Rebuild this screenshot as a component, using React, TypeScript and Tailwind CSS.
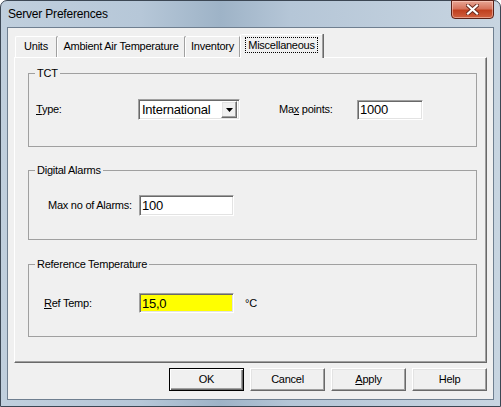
import type { ReactNode } from "react";

const sunken =
  "border border-t-[#a0a0a0] border-l-[#a0a0a0] border-b-white border-r-white shadow-[inset_1px_1px_0_#696969,inset_-1px_-1px_0_#e3e3e3]";

const raised =
  "border border-t-white border-l-white border-r-[#696969] border-b-[#696969] shadow-[inset_-1px_-1px_0_#a0a0a0,inset_1px_1px_0_#e3e3e3]";

function GroupBox({
  title,
  className,
  children,
}: {
  title: string;
  className: string;
  children: ReactNode;
}) {
  return (
    <fieldset className={`border border-[#a0a0a0] ${className}`}>
      <legend className="ml-[6px] px-[2px] leading-[13px]">{title}</legend>
      {children}
    </fieldset>
  );
}

function TextBox({
  value,
  width,
  height = "h-[21px]",
  bg = "bg-white",
}: {
  value: string;
  width: string;
  height?: string;
  bg?: string;
}) {
  return (
    <div
      className={`flex items-center pl-[2px] text-[13px] leading-none ${width} ${height} ${bg} ${sunken}`}
    >
      {value}
    </div>
  );
}

function Button({
  label,
  isDefault,
}: {
  label: ReactNode;
  isDefault?: boolean;
}) {
  return (
    <button
      className={`flex h-[23px] w-[75px] items-center justify-center bg-[#f0f0f0] ${
        isDefault
          ? "border border-black shadow-[inset_1px_1px_0_#fff,inset_-1px_-1px_0_#696969,inset_-2px_-2px_0_#a0a0a0]"
          : raised
      }`}
    >
      {label}
    </button>
  );
}

const tabs = [
  { name: "Units", width: "w-[42px]" },
  { name: "Ambient Air Temperature", width: "w-[128px]" },
  { name: "Inventory", width: "w-[55px]" },
];

export default function App() {
  return (
    <div className="h-[407px] w-[501px] bg-white font-['Liberation_Sans',Arial,sans-serif] text-[11px] tracking-[-0.25px] text-black">
      <div className="flex h-full flex-col rounded-t-[7px] border border-[#3c4754] bg-[linear-gradient(90deg,#c0cfdd_0%,#b6c7d8_28%,#9eb3c7_44%,#b5c6d7_58%,#c8d5e1_100%)]">
        {/* title bar */}
        <div className="flex h-[26px] items-start justify-between pl-[7px] pr-[6px]">
          <span className="mt-[6px] text-[12px] leading-[14px] tracking-[-0.2px]">
            Server Preferences
          </span>
          <div className="-mt-px flex h-[19px] w-[43px] items-center justify-center rounded-b-[4px] border border-[#5b2117] bg-[linear-gradient(180deg,#e8a594_0%,#d6735c_45%,#c0401f_55%,#d0603f_100%)] shadow-[inset_0_0_0_1px_rgba(255,220,210,0.5)]">
            <svg width="13" height="11" viewBox="0 0 13 11">
              <path
                d="M2 1.5 L11 9.5 M11 1.5 L2 9.5"
                stroke="#6a2a1e"
                strokeWidth="4"
                strokeLinecap="square"
              />
              <path
                d="M2 1.5 L11 9.5 M11 1.5 L2 9.5"
                stroke="#ffffff"
                strokeWidth="2.2"
                strokeLinecap="square"
              />
            </svg>
          </div>
        </div>

        {/* client area */}
        <div className="mx-[6px] mb-[6px] flex flex-1 flex-col border border-[#6f7f90] bg-[#f0f0f0] px-[6px]">
          {/* tab strip */}
          <div className="mt-[6px] flex h-[23px] items-end pl-[1px]">
            {tabs.map((t) => (
              <div
                key={t.name}
                className={`flex h-[21px] items-center justify-center rounded-tl-[2px] border-l border-t border-r border-white border-r-[#a0a0a0] pb-[1px] shadow-[1px_0_0_#696969] ${t.width}`}
              >
                {t.name}
              </div>
            ))}
            <div className="relative z-10 -mb-px flex h-[24px] w-[83px] items-start justify-center rounded-tl-[2px] border-l border-t border-r border-white border-r-[#a0a0a0] bg-[#f0f0f0] pt-[2px] shadow-[1px_0_0_#696969]">
              <span className="border border-dotted border-black px-[2px] leading-[14px]">
                Miscellaneous
              </span>
            </div>
          </div>

          {/* tab panel */}
          <div className="flex flex-1 flex-col border border-white border-b-[#696969] border-r-[#696969] pl-[13px] pr-[9px] shadow-[inset_-1px_-1px_0_#a0a0a0]">
            <GroupBox title="TCT" className="mt-[9px] pb-[26px] pt-[19px]">
              <div className="flex h-[21px] items-center">
                <span className="w-[109px] pl-[7px]">
                  <span className="underline">T</span>ype:
                </span>
                <div
                  className={`flex h-[21px] w-[102px] items-center justify-between bg-white pl-[3px] pr-[2px] text-[13px] leading-none ${sunken}`}
                >
                  <span>International</span>
                  <div
                    className={`flex h-[17px] w-[16px] items-center justify-center bg-[#f0f0f0] ${raised}`}
                  >
                    <svg width="7" height="4" viewBox="0 0 7 4">
                      <path d="M0 0 H7 L3.5 4 Z" fill="#000" />
                    </svg>
                  </div>
                </div>
                <span className="ml-[39px] w-[78px]">
                  Ma<span className="underline">x</span> points:
                </span>
                <TextBox value="1000" width="w-[66px]" height="h-[20px]" />
              </div>
            </GroupBox>

            <GroupBox
              title="Digital Alarms"
              className="mt-[17px] pb-[23px] pt-[18px]"
            >
              <div className="flex h-[21px] items-center">
                <span className="w-[110px] pl-[19px]">Max no of Alarms:</span>
                <TextBox value="100" width="w-[95px]" />
              </div>
            </GroupBox>

            <GroupBox
              title="Reference Temperature"
              className="mt-[18px] pb-[23px] pt-[22px]"
            >
              <div className="flex h-[20px] items-center">
                <span className="w-[110px] pl-[15px]">
                  <span className="underline">R</span>ef Temp:
                </span>
                <TextBox
                  value="15,0"
                  width="w-[95px]"
                  height="h-[20px]"
                  bg="bg-[#ffff00]"
                />
                <span className="ml-[11px]">°C</span>
              </div>
            </GroupBox>
          </div>

          {/* buttons */}
          <div className="mb-[8px] mt-[5px] flex justify-end gap-[6px]">
            <Button label="OK" isDefault />
            <Button label="Cancel" />
            <Button
              label={
                <span>
                  <span className="underline">A</span>pply
                </span>
              }
            />
            <Button label="Help" />
          </div>
        </div>
      </div>
    </div>
  );
}
